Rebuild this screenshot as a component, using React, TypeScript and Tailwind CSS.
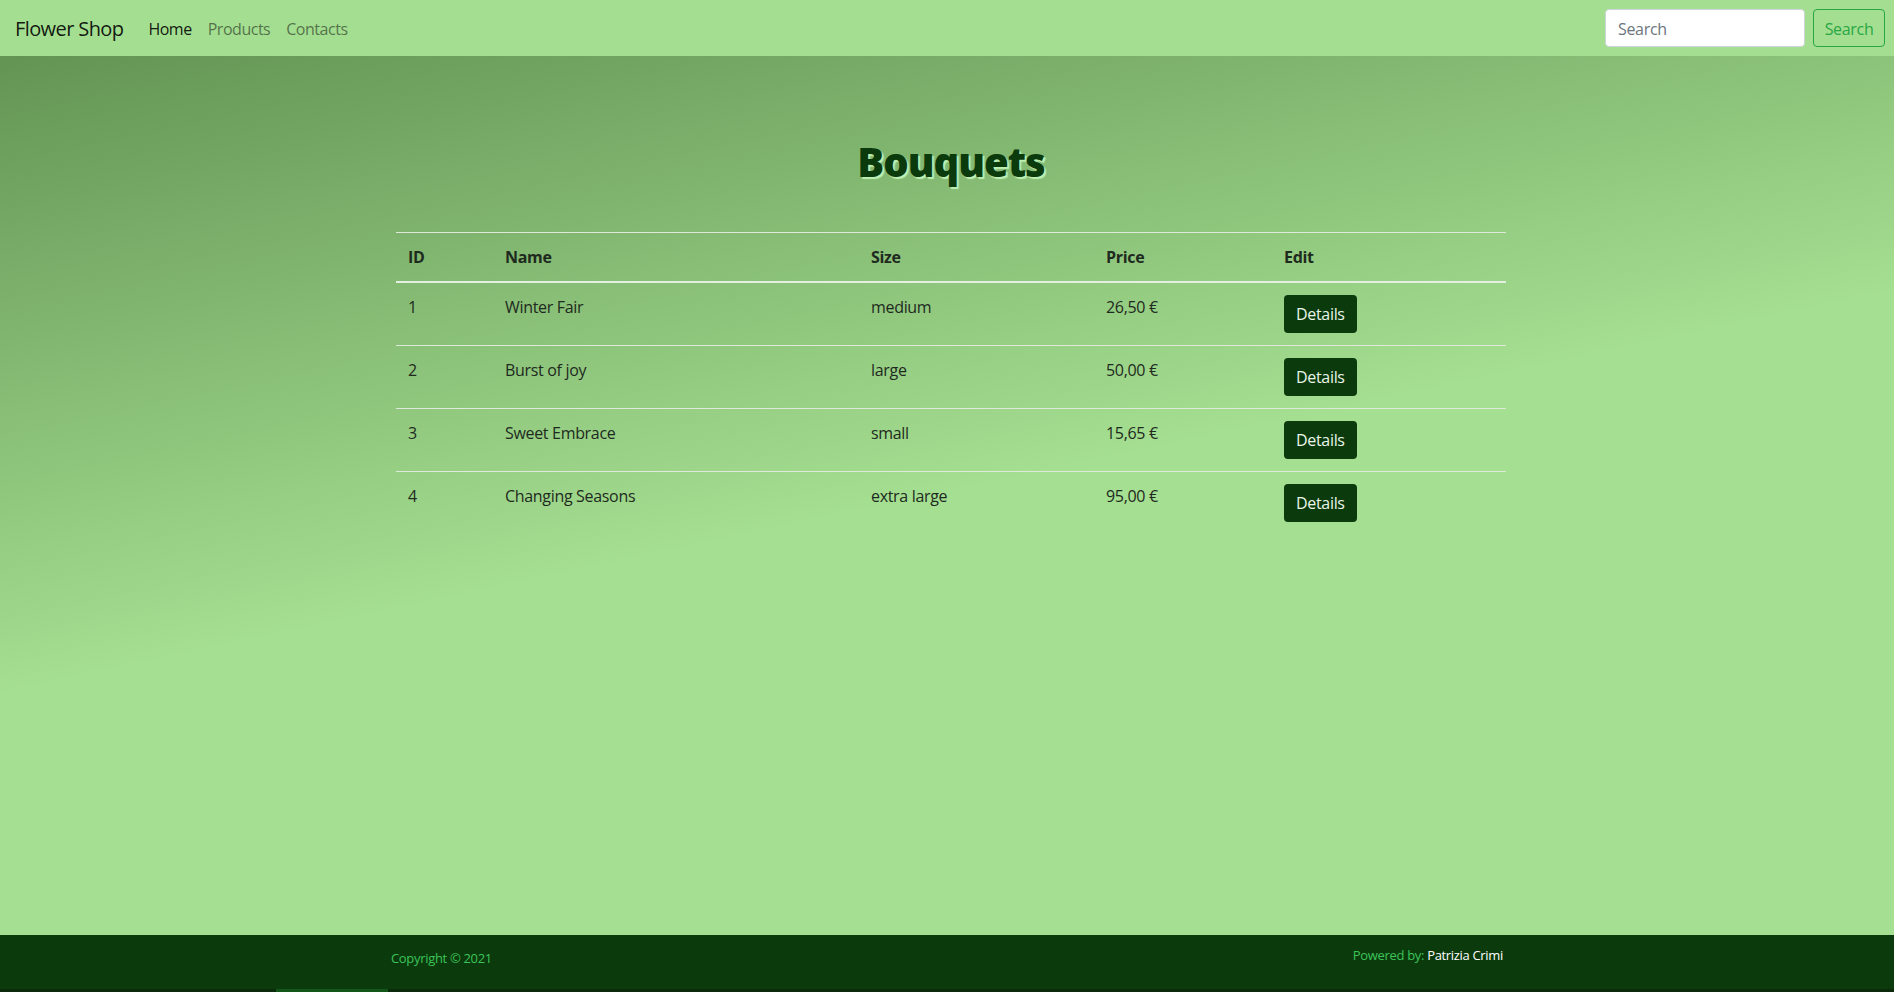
import React from "react";

const rows = [
  { id: 1, name: "Winter Fair", size: "medium", price: "26,50 €" },
  { id: 2, name: "Burst of joy", size: "large", price: "50,00 €" },
  { id: 3, name: "Sweet Embrace", size: "small", price: "15,65 €" },
  { id: 4, name: "Changing Seasons", size: "extra large", price: "95,00 €" },
];

export default function App() {
  return (
    <div
      className="flex h-[992px] flex-col overflow-hidden text-[16px] tracking-[-0.02em]"
      style={{ fontFamily: '"Open Sans", "Noto Sans", sans-serif' }}
    >
      <nav className="flex h-[56px] shrink-0 items-center bg-[#a4de90] pl-[15px] pr-[9px] pt-[2px]">
        <span className="mr-[17px] text-[20px] leading-[30px] tracking-[-0.03em] text-black/90">Flower Shop</span>
        <a className="px-[8px] leading-[24px] tracking-[-0.03em] text-black/90">Home</a>
        <a className="px-[8px] leading-[24px] tracking-[-0.03em] text-black/50">Products</a>
        <a className="px-[8px] leading-[24px] tracking-[-0.03em] text-black/50">Contacts</a>
        <div className="ml-auto -mt-[2px] flex items-center">
          <input
            placeholder="Search"
            className="h-[38px] w-[200px] rounded-[4px] border border-[#ced4da] bg-white px-[12px] pt-[2px] text-[16px] text-[#495057] placeholder:text-[#6c757d] outline-none"
          />
          <button className="ml-[8px] h-[38px] w-[72px] rounded-[4px] border border-[#28a745] pt-[2px] text-[16px] text-[#28a745]">
            Search
          </button>
        </div>
      </nav>

      <main className="flex-1 bg-[linear-gradient(168deg,#639454_0%,#a5df91_50%,#a5df91_100%)] pt-[82px]">
        <h1 className="mb-[46px] pl-[8px] text-center text-[40px] font-extrabold leading-[48px] tracking-[-0.025em] text-[#0b3a0c] [text-shadow:2px_2px_1px_#bdf0b2]">
          Bouquets
        </h1>
        <div className="flex justify-center pl-[8px]">
          <table className="w-[1110px] border-collapse text-left text-[#1e2a1e]">
            <thead>
              <tr className="border-t border-[#dee9da]">
                <th className="w-[97px] border-b-2 border-[#e3efe0] p-[12px] leading-[24px] font-bold">ID</th>
                <th className="w-[366px] border-b-2 border-[#e3efe0] p-[12px] leading-[24px] font-bold">Name</th>
                <th className="w-[235px] border-b-2 border-[#e3efe0] p-[12px] leading-[24px] font-bold">Size</th>
                <th className="w-[178px] border-b-2 border-[#e3efe0] p-[12px] leading-[24px] font-bold">Price</th>
                <th className="border-b-2 border-[#e3efe0] p-[12px] leading-[24px] font-bold">Edit</th>
              </tr>
            </thead>
            <tbody>
              {rows.map((r, i) => (
                <tr key={r.id} className={i > 0 ? "border-t border-[#dee9da]" : ""}>
                  <td className="p-[12px] align-top leading-[24px]">{r.id}</td>
                  <td className="p-[12px] align-top leading-[24px]">{r.name}</td>
                  <td className="p-[12px] align-top leading-[24px]">{r.size}</td>
                  <td className="p-[12px] align-top leading-[24px]">{r.price}</td>
                  <td className="p-[12px] align-top leading-[24px]">
                    <button className="h-[38px] rounded-[4px] bg-[#0b3a0c] px-[12px] text-[16px] text-[#e8f5e8]">
                      Details
                    </button>
                  </td>
                </tr>
              ))}
            </tbody>
          </table>
        </div>
      </main>

      <footer className="h-[54px] shrink-0 bg-[#0b3a0c]">
        <div className="mx-auto flex w-[1112px] items-start justify-between text-[13px] leading-[20px]">
          <span className="pt-[13px] text-[#3cc35a]">Copyright © 2021</span>
          <span className="pt-[10px]">
            <span className="text-[#3cc35a]">Powered by: </span>
            <span className="text-white">Patrizia Crimi</span>
          </span>
        </div>
      </footer>
      <div className="flex h-[3px] shrink-0 bg-[#0a2a0b]">
        <div className="ml-[276px] w-[112px] bg-[#13561a]" />
      </div>
    </div>
  );
}
